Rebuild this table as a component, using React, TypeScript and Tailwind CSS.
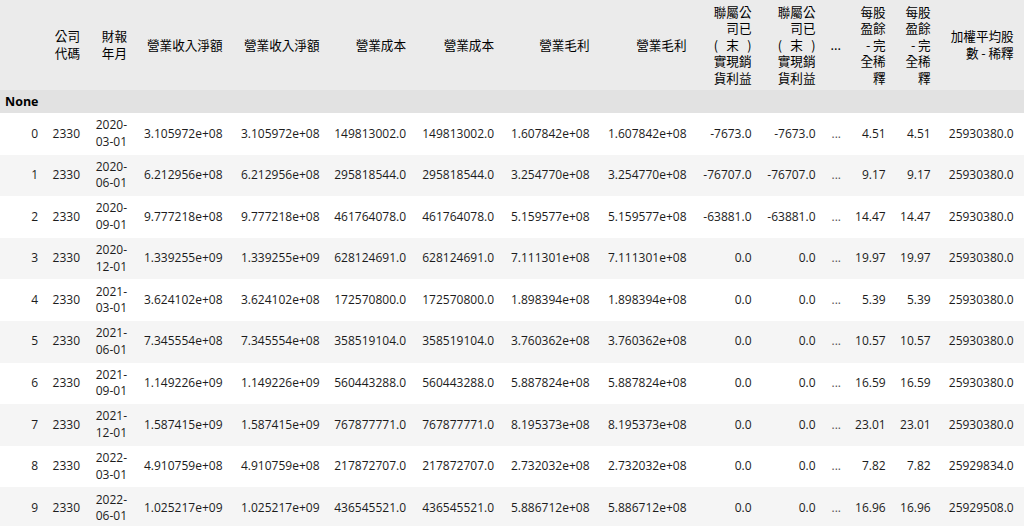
import React from "react";

const widths = [44, 42, 47, 95.5, 97, 86.5, 88, 95.5, 97, 65, 64, 25.5, 44.7, 45, 88];

const Paren = () => (
  <>
    <span className="inline-block w-[1em] text-left">(</span>末<span className="inline-block w-[1em] text-right">)</span>
  </>
);

const headers: React.ReactNode[] = [
  "",
  <>公司<br />代碼</>,
  <>財報<br />年月</>,
  "營業收入淨額",
  "營業收入淨額",
  "營業成本",
  "營業成本",
  "營業毛利",
  "營業毛利",
  <>聯屬公<br />司已<br /><Paren /><br />實現銷<br />貨利益</>,
  <>聯屬公<br />司已<br /><Paren /><br />實現銷<br />貨利益</>,
  "...",
  <>每股<br />盈餘<br />- 完<br />全稀<br />釋</>,
  <>每股<br />盈餘<br />- 完<br />全稀<br />釋</>,
  <>加權平均股<br />數 - 稀釋</>,
];

type Row = [string, string, string, string, string, string, string, string];

const rows: Row[] = [
  ["2020", "03-01", "3.105972e+08", "149813002.0", "1.607842e+08", "-7673.0", "4.51", "25930380.0"],
  ["2020", "06-01", "6.212956e+08", "295818544.0", "3.254770e+08", "-76707.0", "9.17", "25930380.0"],
  ["2020", "09-01", "9.777218e+08", "461764078.0", "5.159577e+08", "-63881.0", "14.47", "25930380.0"],
  ["2020", "12-01", "1.339255e+09", "628124691.0", "7.111301e+08", "0.0", "19.97", "25930380.0"],
  ["2021", "03-01", "3.624102e+08", "172570800.0", "1.898394e+08", "0.0", "5.39", "25930380.0"],
  ["2021", "06-01", "7.345554e+08", "358519104.0", "3.760362e+08", "0.0", "10.57", "25930380.0"],
  ["2021", "09-01", "1.149226e+09", "560443288.0", "5.887824e+08", "0.0", "16.59", "25930380.0"],
  ["2021", "12-01", "1.587415e+09", "767877771.0", "8.195373e+08", "0.0", "23.01", "25930380.0"],
  ["2022", "03-01", "4.910759e+08", "217872707.0", "2.732032e+08", "0.0", "7.82", "25929834.0"],
  ["2022", "06-01", "1.025217e+09", "436545521.0", "5.886712e+08", "0.0", "16.96", "25929508.0"],
];

export default function App() {
  return (
    <div
      className="w-[1024px] h-[526px] overflow-hidden bg-white text-[#1c1c1c]"
      style={{ fontFamily: '"Open Sans", "Noto Sans CJK TC", sans-serif' }}
    >
      <table className="table-fixed border-collapse w-[1024px] text-[12px]">
        <colgroup>
          {widths.map((w, i) => (
            <col key={i} style={{ width: `${w}px` }} />
          ))}
        </colgroup>
        <thead>
          <tr className="bg-[#ebebeb]">
            {headers.map((h, i) => (
              <th
                key={i}
                className={`h-[90px] px-[6px] py-[3px] text-right align-middle font-normal text-[12.6px] leading-[16.6px] text-black ${i === 14 ? "pr-[11px]" : ""}`}
                style={{ fontFamily: '"Noto Sans CJK TC", "Open Sans", sans-serif' }}
              >
                {h}
              </th>
            ))}
          </tr>
          <tr className="bg-[#e2e2e2]">
            <th className="h-[23px] pl-[5px] py-0 text-left align-middle font-bold text-[12.5px] leading-[17px] text-black">
              None
            </th>
            {widths.slice(1).map((_, i) => (
              <th key={i} className="h-[23px] p-0" />
            ))}
          </tr>
        </thead>
        <tbody>
          {rows.map((r, i) => {
            const cells: React.ReactNode[] = [
              String(i),
              "2330",
              <>{r[0]}-<br />{r[1]}</>,
              r[2],
              r[2],
              r[3],
              r[3],
              r[4],
              r[4],
              r[5],
              r[5],
              "...",
              r[6],
              r[6],
              r[7],
            ];
            return (
              <tr key={i} className={i % 2 === 1 ? "bg-[#f5f5f5]" : "bg-white"}>
                {cells.map((c, j) => (
                  <td
                    key={j}
                    className={`h-[41.6px] px-[6px] py-[4.2px] text-right align-middle leading-[16.6px] whitespace-nowrap ${j === 14 ? "pr-[11px]" : ""} ${j === 11 ? "text-[#555]" : ""}`}
                  >
                    {c}
                  </td>
                ))}
              </tr>
            );
          })}
        </tbody>
      </table>
    </div>
  );
}
